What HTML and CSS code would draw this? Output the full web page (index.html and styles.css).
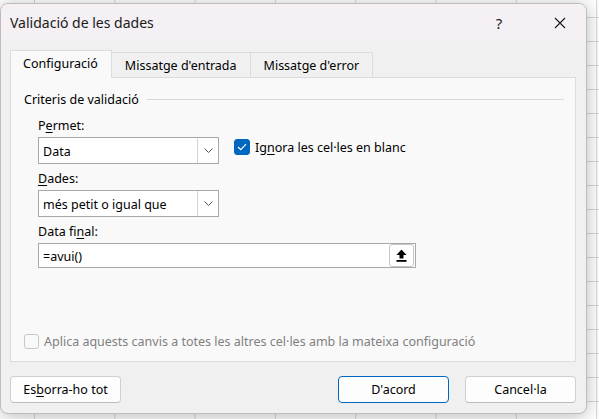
FILE: index.html
```html
<!DOCTYPE html>
<html lang="ca">
<head>
<meta charset="utf-8">
<title>Validació de les dades</title>
<link rel="stylesheet" href="styles.css">
</head>
<body>
<div class="sheet">
  <div class="dialog">
    <div class="titlebar">
      <span class="title">Validació de les dades</span>
      <span class="help">?</span>
      <span class="close">
        <svg width="12" height="12" viewBox="0 0 12 12"><path d="M1 1 L11 11 M11 1 L1 11" stroke="#1a1a1a" stroke-width="1.1" fill="none"/></svg>
      </span>
    </div>
    <div class="body">
      <div class="tabs">
        <div class="tab active">Configuració</div>
        <div class="tab">Missatge d'entrada</div>
        <div class="tab">Missatge d'error</div>
      </div>
      <div class="panel">
        <div class="legend"><span>Criteris de validació</span><span class="rule"></span></div>
        <div class="fields">
          <div class="label">P<u>e</u>rmet:</div>
          <div class="row">
            <div class="select">
              <span class="value">Data</span>
              <span class="arrow"><svg width="9" height="5" viewBox="0 0 9 5"><path d="M0.5 0.5 L4.5 4.5 L8.5 0.5" stroke="#555" stroke-width="1" fill="none"/></svg></span>
            </div>
            <label class="check">
              <span class="box checked"><svg width="10" height="8" viewBox="0 0 10 8"><path d="M1 4 L3.8 6.6 L9 1.2" stroke="#fff" stroke-width="1.2" fill="none"/></svg></span>
              <span>Ig<u>n</u>ora les cel·les en blanc</span>
            </label>
          </div>
          <div class="label"><u>D</u>ades:</div>
          <div class="select">
            <span class="value">més petit o igual que</span>
            <span class="arrow"><svg width="9" height="5" viewBox="0 0 9 5"><path d="M0.5 0.5 L4.5 4.5 L8.5 0.5" stroke="#555" stroke-width="1" fill="none"/></svg></span>
          </div>
          <div class="label">Data fi<u>n</u>al:</div>
          <div class="input">
            <span class="value">=avui()</span>
            <span class="collapse"><svg width="11" height="13" viewBox="0 0 11 13"><path d="M5.5 0.5 L10.5 6 L7.5 6 L7.5 9.5 L3.5 9.5 L3.5 6 L0.5 6 Z" fill="#000"/><rect x="0.5" y="11" width="10" height="1.8" fill="#000"/></svg></span>
          </div>
        </div>
        <label class="check disabled">
          <span class="box"></span>
          <span>Aplica aquests canvis a totes les altres cel·les amb la mateixa configuració</span>
        </label>
      </div>
      <div class="buttons">
        <button class="btn">Es<u>b</u>orra-ho tot</button>
        <span class="spacer"></span>
        <button class="btn primary">D'acord</button>
        <button class="btn">Cancel·la</button>
      </div>
    </div>
  </div>
</div>
</body>
</html>
```

FILE: styles.css
```css
* { box-sizing: border-box; }

html, body {
  margin: 0;
  height: 100%;
}

body {
  font-family: "Noto Sans", "Open Sans", sans-serif;
  font-size: 12.5px;
  font-feature-settings: "locl" 0;
  font-variant-ligatures: none;
  color: #000;
  background-color: #ffffff;
  background-image:
    linear-gradient(to right, #d6d6d6 1px, transparent 1px),
    linear-gradient(to bottom, #d6d6d6 1px, transparent 1px);
  background-size: 80.3px 24px;
  background-position: 34px 17px;
  overflow: hidden;
}

.sheet {
  padding-top: 3px;
}

/* dialog window */
.dialog {
  width: 587px;
  height: 411px;
  background: #f0f0f0;
  border: 1px solid #bdbdbd;
  border-radius: 8px;
  box-shadow: 0 2px 18px rgba(0, 0, 0, 0.28);
  display: flex;
  flex-direction: column;
  overflow: hidden;
}

.titlebar {
  height: 37px;
  background: #f4f0f3;
  display: flex;
  align-items: center;
  flex-shrink: 0;
}

.title {
  font-size: 14px;
  padding-left: 9px;
  flex: 1;
  color: #1a1a1a;
}

.help {
  font-size: 15px;
  width: 40px;
  text-align: center;
  color: #1a1a1a;
  margin-right: 18px;
}

.close {
  width: 46px;
  display: flex;
  justify-content: center;
  margin-right: 3px;
}

.body {
  flex: 1;
  display: flex;
  flex-direction: column;
  padding: 9px 10px 0 9px;
}

/* tab strip */
.tabs {
  display: flex;
  align-items: flex-end;
  height: 27px;
  position: relative;
  z-index: 1;
}

.tab {
  height: 25px;
  padding: 0 13px;
  border: 1px solid #dcdcdc;
  border-bottom: none;
  background: #f0f0f0;
  display: flex;
  align-items: center;
  margin-left: -1px;
}

.tab:first-child { margin-left: 0; }

.tab.active {
  height: 28px;
  margin-bottom: -1px;
  background: #f9f9f9;
  padding: 0 13px 2px 12px;
}

/* page of the active tab */
.panel {
  height: 285px;
  background: #f9f9f9;
  border: 1px solid #dcdcdc;
  display: flex;
  flex-direction: column;
  padding: 13px 11px 12px 13px;
}

.legend {
  display: flex;
  align-items: center;
  height: 16px;
}

.legend .rule {
  flex: 1;
  height: 1px;
  background: #d9d9d9;
  margin-left: 8px;
}

.fields {
  padding-left: 14px;
  display: flex;
  flex-direction: column;
  align-items: flex-start;
}

.label {
  height: 16px;
  line-height: 16px;
  margin-top: 7px;
  margin-bottom: 3px;
}

.fields .label:first-child { margin-top: 11px; }

u { text-decoration-thickness: 1px; text-underline-offset: 2px; }

.row {
  display: flex;
  align-items: flex-start;
}

.select {
  width: 181px;
  height: 27px;
  background: #fff;
  border: 1px solid #a8a8a8;
  display: flex;
  align-items: stretch;
}

.select .value,
.input .value {
  flex: 1;
  display: flex;
  align-items: center;
  padding-left: 4px;
  padding-top: 1px;
}

.select .arrow {
  width: 21px;
  border-left: 1px solid #d4d4d4;
  display: flex;
  align-items: center;
  justify-content: center;
}

.input {
  width: 378px;
  height: 25px;
  background: #fff;
  border: 1px solid #a8a8a8;
  display: flex;
  align-items: stretch;
}

.collapse {
  width: 25px;
  margin: 0 1px 0 0;
  border: 1px solid #c6c6c6;
  border-radius: 3px;
  display: flex;
  align-items: center;
  justify-content: center;
  background: #fff;
}

/* check boxes */
.check {
  display: flex;
  align-items: center;
  gap: 5px;
  height: 16px;
}

.row .check {
  margin-left: 15px;
  margin-top: 2px;
}

.box {
  width: 16px;
  height: 16px;
  border-radius: 3px;
  border: 1px solid #c2c2c2;
  background: #f9f9f9;
  display: flex;
  align-items: center;
  justify-content: center;
}

.box.checked {
  background: #0067c0;
  border-color: #0067c0;
}

.check.disabled {
  margin-top: auto;
  color: #808080;
}

.check.disabled .box {
  width: 15px;
  height: 15px;
  border-color: #c8c8c8;
}

/* dialog buttons */
.buttons {
  display: flex;
  margin-top: 14px;
  gap: 16px;
}

.spacer { flex: 1; }

.btn {
  font: inherit;
  color: #000;
  height: 27px;
  width: 111px;
  background: #fdfdfd;
  border: 1px solid #d0d0d0;
  border-bottom-color: #bdbdbd;
  border-radius: 4px;
  padding: 0;
}

.btn.primary {
  border-color: #0067c0;
}
```
